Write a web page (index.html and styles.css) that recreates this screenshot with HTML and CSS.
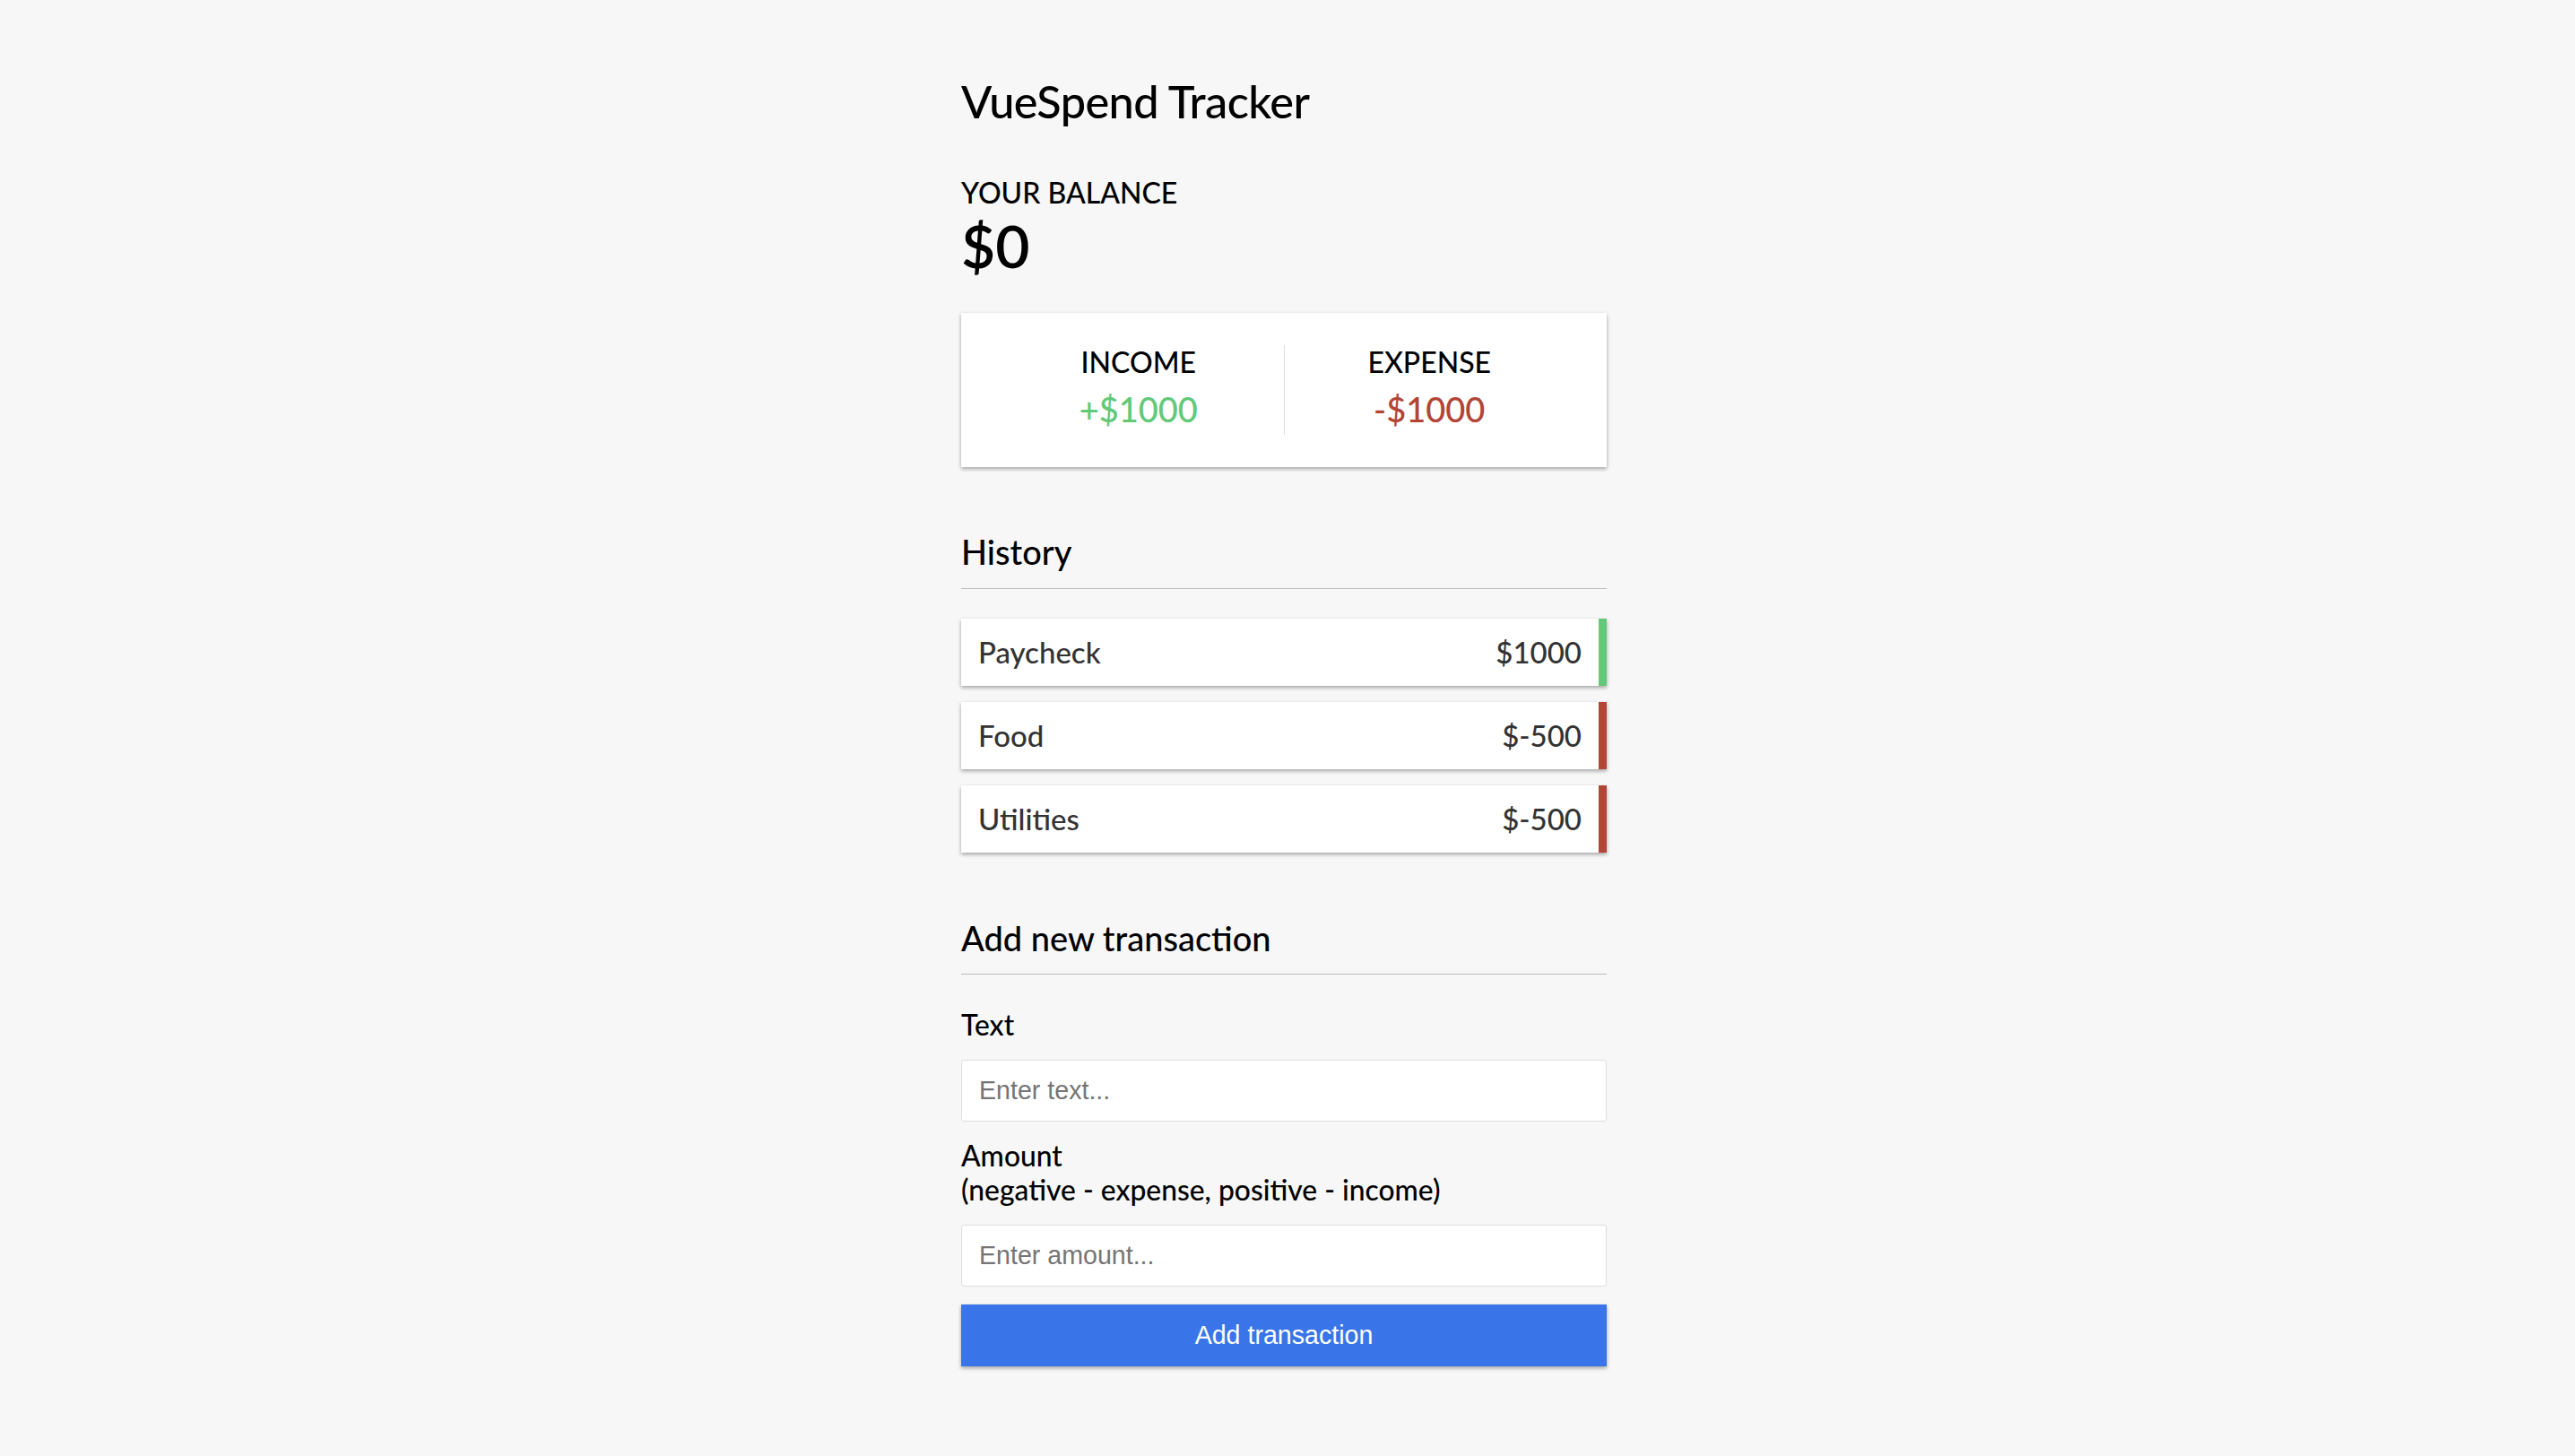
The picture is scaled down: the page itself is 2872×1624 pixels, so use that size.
FILE: index.html
```html
<!DOCTYPE html>
<html lang="en">
<head>
<meta charset="UTF-8">
<title>VueSpend Tracker</title>
<link rel="stylesheet" href="styles.css">
</head>
<body>
<div class="container">
  <h2 class="title">VueSpend Tracker</h2>

  <h4 class="balance-label">Your Balance</h4>
  <h1 class="balance">$0</h1>

  <div class="inc-exp">
    <div class="inc-exp-col inc-exp-col--first">
      <h4 class="inc-exp-label">Income</h4>
      <p class="money money--plus">+$1000</p>
    </div>
    <div class="inc-exp-col">
      <h4 class="inc-exp-label">Expense</h4>
      <p class="money money--minus">-$1000</p>
    </div>
  </div>

  <h3 class="section-title section-title--history">History</h3>
  <ul class="list">
    <li class="list-item list-item--plus"><span>Paycheck</span><span>$1000</span></li>
    <li class="list-item list-item--minus"><span>Food</span><span>$-500</span></li>
    <li class="list-item list-item--minus"><span>Utilities</span><span>$-500</span></li>
  </ul>

  <h3 class="section-title">Add new transaction</h3>
  <form class="form">
    <div class="form-control">
      <label class="form-label" for="text">Text</label>
      <input class="form-input" type="text" id="text" placeholder="Enter text...">
    </div>
    <div class="form-control">
      <label class="form-label" for="amount">Amount<br>(negative - expense, positive - income)</label>
      <input class="form-input" type="text" id="amount" placeholder="Enter amount...">
    </div>
    <button class="btn" type="button">Add transaction</button>
  </form>
</div>
</body>
</html>
```

FILE: styles.css
```css
* {
  box-sizing: border-box;
}

body {
  margin: 0;
  padding: 0 8px 0 0;
  background-color: #f7f7f7;
  font-family: Lato, "Open Sans", sans-serif;
  font-weight: 500;
  color: #000;
}

.container {
  width: 720px;
  margin: 0 auto;
  padding-top: 83px;
}

.title {
  margin: 0;
  font-size: 50.5px;
  line-height: 1.2;
  font-weight: 500;
  letter-spacing: -0.6px;
  color: #000;
}

.balance-label {
  margin: 52px 0 0;
  font-size: 32px;
  line-height: 1.2;
  font-weight: 500;
  text-transform: uppercase;
}

.balance {
  margin: 0;
  font-size: 66px;
  line-height: 1.2;
  font-weight: 600;
}

.inc-exp {
  margin-top: 36px;
  background-color: #fff;
  box-shadow: 0 2px 5px rgba(0, 0, 0, 0.12), 0 2px 4px rgba(0, 0, 0, 0.24);
  padding: 36px;
  display: flex;
}

.inc-exp-col {
  flex: 1;
  text-align: center;
}

.inc-exp-col--first {
  border-right: 1px solid #dedede;
}

.inc-exp-label {
  margin: 0;
  font-size: 32px;
  line-height: 1.2;
  font-weight: 500;
  text-transform: uppercase;
}

.money {
  margin: 10px 0 6px;
  font-size: 38px;
  line-height: 1.2;
}

.money--plus {
  color: #62c97a;
}

.money--minus {
  color: #b24536;
}

.section-title {
  margin: 73px 0 18px;
  padding-bottom: 17px;
  border-bottom: 1px solid #bbb;
  font-size: 38px;
  line-height: 1.2;
  font-weight: 500;
}

.section-title--history {
  margin-top: 72px;
  margin-bottom: 0;
}

.list {
  list-style: none;
  margin: 33px 0 0;
  padding: 0;
  display: flex;
  flex-direction: column;
  gap: 18px;
}

.list-item {
  background-color: #fff;
  box-shadow: 0 2px 5px rgba(0, 0, 0, 0.12), 0 2px 4px rgba(0, 0, 0, 0.24);
  color: #333;
  display: flex;
  justify-content: space-between;
  padding: 18px 19px;
  font-size: 33px;
  line-height: 39px;
}

.list-item--plus {
  border-right: 9px solid #62c97a;
}

.list-item--minus {
  border-right: 9px solid #b24536;
}

.form {
  margin: 0;
}

.form-control {
  display: flex;
  flex-direction: column;
}

.form-label {
  margin: 19px 0;
  font-size: 31.8px;
  line-height: 38.4px;
}

.form-input {
  display: block;
  width: 100%;
  height: 69px;
  padding: 0 19px;
  border: 1px solid #dedede;
  border-radius: 3px;
  background: #fff;
  font-family: "Liberation Sans", Arial, sans-serif;
  font-size: 28.6px;
  color: #333;
}

.form-input::placeholder {
  color: #757575;
}

.btn {
  display: block;
  width: 100%;
  height: 69px;
  margin: 20px 0 55px;
  border: 0;
  background-color: #3975e8;
  color: #fff;
  box-shadow: 0 2px 5px rgba(0, 0, 0, 0.12), 0 2px 4px rgba(0, 0, 0, 0.24);
  font-family: "Liberation Sans", Arial, sans-serif;
  font-size: 28.6px;
  cursor: pointer;
}
```
